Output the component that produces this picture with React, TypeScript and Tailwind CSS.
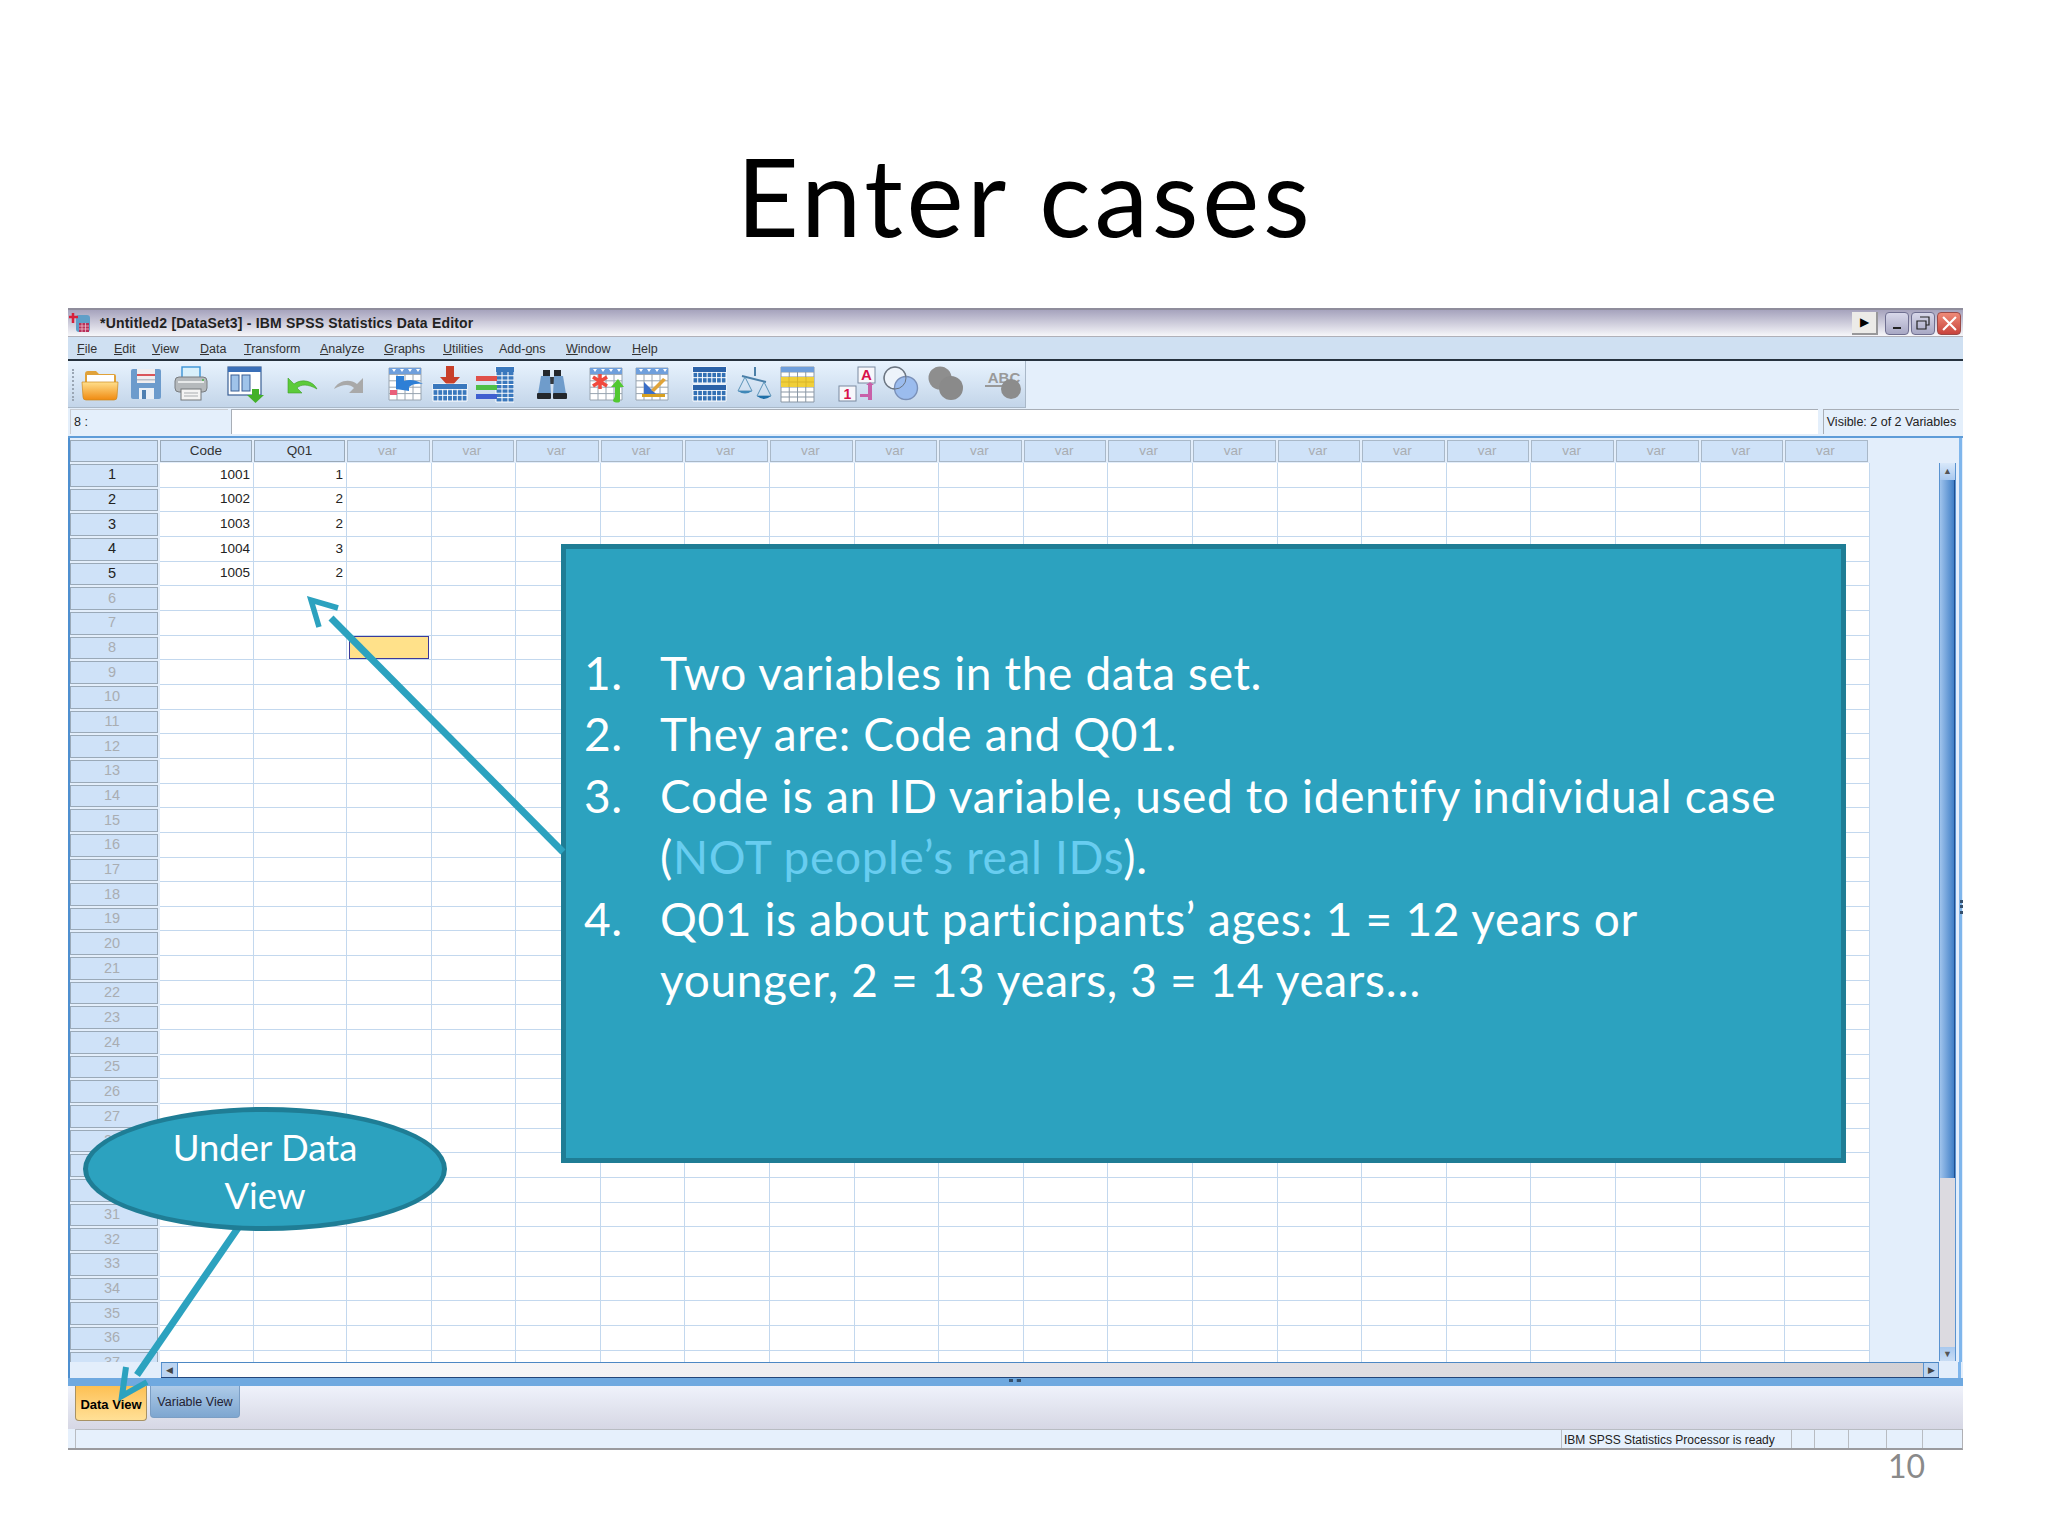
import React from "react";

const menus = [
  { pre: "", u: "F", post: "ile", cls: "w-[37px]" },
  { pre: "", u: "E", post: "dit", cls: "w-[38px]" },
  { pre: "", u: "V", post: "iew", cls: "w-[48px]" },
  { pre: "", u: "D", post: "ata", cls: "w-[44px]" },
  { pre: "", u: "T", post: "ransform", cls: "w-[76px]" },
  { pre: "", u: "A", post: "nalyze", cls: "w-[64px]" },
  { pre: "", u: "G", post: "raphs", cls: "w-[59px]" },
  { pre: "", u: "U", post: "tilities", cls: "w-[56px]" },
  { pre: "Add-", u: "o", post: "ns", cls: "w-[67px]" },
  { pre: "", u: "W", post: "indow", cls: "w-[66px]" },
  { pre: "", u: "H", post: "elp", cls: "w-[40px]" },
];

const varCols = Array.from({ length: 18 }, (_, i) => i);
const rowNums = Array.from({ length: 37 }, (_, i) => i + 1);
const data: Record<number, [string, string]> = {
  1: ["1001", "1"],
  2: ["1002", "2"],
  3: ["1003", "2"],
  4: ["1004", "3"],
  5: ["1005", "2"],
};

function Grid({ x, y, w, h, cols, rows, line = "#8a97a5", fill = "#fff" }: { x: number; y: number; w: number; h: number; cols: number; rows: number; line?: string; fill?: string }) {
  const v = Array.from({ length: cols + 1 }, (_, i) => x + (w * i) / cols);
  const r = Array.from({ length: rows + 1 }, (_, i) => y + (h * i) / rows);
  return (
    <g>
      <rect x={x} y={y} width={w} height={h} fill={fill} />
      {v.map((p) => <line key={"v" + p} x1={p} x2={p} y1={y} y2={y + h} stroke={line} strokeWidth="1" />)}
      {r.map((p) => <line key={"h" + p} x1={x} x2={x + w} y1={p} y2={p} stroke={line} strokeWidth="1" />)}
    </g>
  );
}

function HeaderTable() {
  return (
    <g>
      <Grid x={3} y={3} w={32} h={32} cols={4} rows={5} line="#98a4b0" />
      <rect x={3} y={3} width={32} height={6} fill="#6f9fdc" />
      <path d="M6 4h4l-2 3zM14 4h4l-2 3zM22 4h4l-2 3zM30 4h4l-2 3z" fill="#fff" />
    </g>
  );
}

function Ic({ ml, children }: { ml: string; children: React.ReactNode }) {
  return <svg viewBox="0 0 38 38" className={`w-[38px] h-[38px] shrink-0 ${ml}`}>{children}</svg>;
}

function Toolbar() {
  return (
    <div className="relative flex items-center w-[958px] h-[47px] bg-linear-to-b from-[#e8f3fe] to-[#c3d5e9] border-b border-r border-[#a9b8c8]">
      <div className="absolute left-[4px] top-[8px] h-[32px] w-[2px] border-l-2 border-dotted border-[#9aa6b4]"></div>
      <Ic ml="ml-[13px]">
        <defs>
          <linearGradient id="fo" x1="0" x2="0" y1="0" y2="1">
            <stop offset="0" stopColor="#ffdf8c" />
            <stop offset="1" stopColor="#f08a10" />
          </linearGradient>
        </defs>
        <path d="M4 9q0-3 3-3h8l3 3h15q2 0 2 2v8H4z" fill="#e0a23a" />
        <rect x="6" y="10" width="27" height="9" fill="#fff" />
        <path d="M1 17h36l-1 15q0 3-3 3H5q-3 0-3-3z" fill="url(#fo)" stroke="#cc8a20" strokeWidth="0.7" />
      </Ic>
      <Ic ml="ml-[8px]">
        <rect x="4" y="4" width="30" height="30" rx="2" fill="#6c9bcc" />
        <rect x="10" y="4" width="18" height="14" fill="#f0eef0" />
        <rect x="10" y="9" width="18" height="2" fill="#d9555a" />
        <rect x="10" y="14" width="18" height="1.5" fill="#b9bdc6" />
        <rect x="12" y="23" width="15" height="11" fill="#e9eff6" />
        <rect x="15" y="25" width="4" height="9" fill="#4f7fb0" />
      </Ic>
      <Ic ml="ml-[7px]">
        <rect x="10" y="2" width="18" height="12" fill="#d9f0fb" stroke="#3a93d6" strokeWidth="1.4" />
        <rect x="3" y="12" width="32" height="15" rx="4" fill="#b5b9bc" stroke="#797d80" />
        <rect x="6" y="16" width="26" height="2" fill="#e7e9ea" />
        <circle cx="31" cy="15" r="1" fill="#49b04a" />
        <rect x="9" y="24" width="20" height="11" fill="#f4f4f4" stroke="#74787b" />
        <path d="M12 28h14M12 31h14" stroke="#a9adb0" />
      </Ic>
      <Ic ml="ml-[17px]">
        <rect x="1" y="2" width="33" height="28" fill="#fff" stroke="#3a5f94" strokeWidth="1.2" />
        <rect x="1" y="2" width="33" height="5" fill="#3a6fb8" />
        <rect x="4" y="10" width="8" height="16" fill="#9fc3ea" stroke="#3a5f94" />
        <rect x="15" y="10" width="8" height="16" fill="#9fc3ea" stroke="#3a5f94" />
        <path d="M25 24h7v6h5l-8.500 8-8.500-8h5z" fill="#43b02a" />
      </Ic>
      <Ic ml="ml-[19px]">
        <path d="M4 13v15h14l-5-5c4-4 11-4 20 1-4-8-15-11-23-5z" fill="#5ccb3a" stroke="#3f9e2a" strokeWidth="0.6" />
      </Ic>
      <Ic ml="ml-[7px]">
        <path d="M34 13v15H20l5-5c-4-4-11-4-20 1 4-8 15-11 23-5z" fill="#a9a9a9" />
      </Ic>
      <Ic ml="ml-[19px]">
        <HeaderTable />
        <rect x="4" y="25" width="7" height="5" fill="#e9607a" />
        <path d="M10 11h8v5c6-2 12-1 19 3-6-1-11 0-14 3v4l-13-2z" fill="#2e7fd6" />
      </Ic>
      <Ic ml="ml-[7px]">
        <path d="M15 1h8v11h6L19 23 9 12h6z" fill="#c8402a" />
        <Grid x={2} y={19} w={34} h={17} cols={7} rows={3} line="#fff" fill="#3a78bd" />
        <rect x="2" y="19" width="34" height="5" fill="#3a78bd" />
      </Ic>
      <Ic ml="ml-[7px]">
        <Grid x={20} y={2} w={18} h={35} cols={3} rows={8} line="#fff" fill="#3a78bd" />
        <rect x="20" y="2" width="18" height="5" fill="#3a78bd" />
        <rect x="0" y="11" width="21" height="5" fill="#e0504a" />
        <rect x="0" y="20" width="21" height="5" fill="#4fbf46" />
        <rect x="0" y="29" width="21" height="5" fill="#3f5fd0" />
      </Ic>
      <Ic ml="ml-[19px]">
        <rect x="10" y="5" width="7" height="6" fill="#23272c" />
        <rect x="21" y="5" width="7" height="6" fill="#23272c" />
        <rect x="15" y="12" width="8" height="7" fill="#33383e" />
        <path d="M8 11h9l1 18H5z" fill="#6f9ccb" />
        <path d="M21 11h9l3 18H20z" fill="#6f9ccb" />
        <rect x="4" y="28" width="14" height="6" rx="1" fill="#23272c" />
        <rect x="20" y="28" width="14" height="6" rx="1" fill="#23272c" />
      </Ic>
      <Ic ml="ml-[16px]">
        <HeaderTable />
        <path d="M13 9v15M6 12l14 9M6 21l14-9" stroke="#f04a3e" strokeWidth="3.500" />
        <path d="M33 36V22h4l-6-8-7 8h4v8c0 3-2 4-2 6 2 2 7 2 7 0z" fill="#52c832" />
      </Ic>
      <Ic ml="ml-[8px]">
        <HeaderTable />
        <path d="M11 17v12h12z" fill="#3a6fc8" />
        <path d="M18 25l12-12 3 2-12 12z" fill="#e0a43a" />
        <rect x="9" y="29" width="23" height="3" fill="#d8a020" />
      </Ic>
      <Ic ml="ml-[20px]">
        <Grid x={2} y={2} w={33} h={16} cols={7} rows={3} line="#fff" fill="#3270b4" />
        <rect x="2" y="2" width="33" height="5" fill="#2b62a8" />
        <Grid x={2} y={20} w={33} h={16} cols={7} rows={3} line="#fff" fill="#3270b4" />
        <rect x="2" y="20" width="33" height="5" fill="#2b62a8" />
      </Ic>
      <Ic ml="ml-[6px]">
        <path d="M20 2v9M7 11l24 6" stroke="#4a7fa8" strokeWidth="2" />
        <path d="M10 12L3 26h14zM29 17l-7 14h14z" fill="none" stroke="#5a93b8" />
        <path d="M3 26q7 5 14 0z" fill="#3f88b8" />
        <path d="M22 31q7 6 14 0z" fill="#1f6fa8" />
      </Ic>
      <Ic ml="ml-[6px]">
        <Grid x={2} y={2} w={33} h={35} cols={4} rows={7} line="#8a97a5" />
        <rect x="2" y="2" width="33" height="5" fill="#6f9fdc" />
        <rect x="2" y="12" width="33" height="10" fill="#f0cf3a" />
        <path d="M10 12v10M18.500 12v10M27 12v10M2 17h33" stroke="#d8b52a" />
      </Ic>
      <Ic ml="ml-[21px]">
        <rect x="20" y="2" width="17" height="16" fill="#f7f7fb" stroke="#7a8aa0" />
        <text x="28.500" y="15" textAnchor="middle" fontSize="15" fontWeight="700" fill="#d8104a" fontFamily="Liberation Sans, sans-serif">A</text>
        <rect x="1" y="21" width="17" height="15" fill="#f7f7fb" stroke="#7a8aa0" />
        <text x="9.500" y="33.500" textAnchor="middle" fontSize="14" fontWeight="700" fill="#d8104a" fontFamily="Liberation Sans, sans-serif">1</text>
        <path d="M22 29h8v-9h-2l4-3 4 3h-2v15h-4v-3h-8z" fill="#c860a8" />
      </Ic>
      <Ic ml="ml-[6px]">
        <circle cx="13" cy="13" r="11" fill="#edf3fa" stroke="#808a96" strokeWidth="1.4" />
        <circle cx="24" cy="23" r="11.500" fill="#9bbcee" stroke="#7a90b8" strokeWidth="1.4" />
        <path d="M13 13m11 0a11 11 0 1 1-22 0a11 11 0 1 1 22 0" fill="none" stroke="#6a7480" strokeWidth="1" />
      </Ic>
      <Ic ml="ml-[7px]">
        <circle cx="13" cy="13" r="11.500" fill="#8e8e8e" />
        <circle cx="24" cy="23" r="12" fill="#8a8a8a" />
      </Ic>
      <Ic ml="ml-[19px]">
        <text x="20" y="18" textAnchor="middle" fontSize="15" fontWeight="700" fill="#999" fontFamily="Liberation Sans, sans-serif">ABC</text>
        <rect x="1" y="20" width="24" height="2" fill="#999" />
        <circle cx="27" cy="24" r="10" fill="#8c8c8c" />
      </Ic>
    </div>
  );
}

function Row({ n }: { n: number }) {
  const d = data[n];
  return (
    <div className="flex h-[24.67px]">
      <div className="w-[90px] shrink-0 bg-[#e3eefb] pr-[2px] pt-[1px] pb-[1px]">
        <div className={`h-full bg-[#cfe2f8] border border-[#9aa9b8] flex items-center justify-center pr-[4px] text-[14.500px] ${n <= 5 ? "text-[#222]" : "text-[#a9adb2]"}`}>{n}</div>
      </div>
      <div className="w-[94px] shrink-0 bg-white border-r border-b border-[#c3d8ee] flex items-center justify-end pr-[3px] text-[#222]">{d ? d[0] : ""}</div>
      <div className="w-[93px] shrink-0 bg-white border-r border-b border-[#c3d8ee] flex items-center justify-end pr-[3px] text-[#222]">{d ? d[1] : ""}</div>
      {varCols.map((c) => (
        <div key={c} className="w-[84.6px] shrink-0 bg-white border-r border-b border-[#c3d8ee] pl-[2px] pr-[2px] py-[0.5px]">
          {n === 8 && c === 0 ? <div className="h-full bg-[#ffe18a] border border-[#3c3a9a]"></div> : null}
        </div>
      ))}
    </div>
  );
}

function SpssWindow() {
  return (
    <div className="relative w-[1895px] h-[1142px] font-['Liberation_Sans',sans-serif]">
      <div className="h-[29px] flex items-center border-t-2 border-b border-t-[#8f8d9c] border-b-[#b0b0b8] bg-linear-to-b from-[#a6a3bd] to-[#f7f7fa]">
        <svg viewBox="0 0 22 22" className="w-[22px] h-[22px] ml-[1px] shrink-0">
          <rect x="7" y="3" width="14" height="17" rx="3" fill="#5f9fc8" />
          <path d="M4 1v10M0 5h9" stroke="#d8203a" strokeWidth="2.500" />
          <rect x="10" y="11" width="10" height="9" fill="#b8305a" />
          <path d="M10 14h10M10 17h10M13 11v9M16.500 11v9" stroke="#f0d0d8" strokeWidth="0.7" />
        </svg>
        <span className="ml-[9px] text-[14px] font-bold text-[#222] tracking-[0.2px] whitespace-nowrap">*Untitled2 [DataSet3] - IBM SPSS Statistics Data Editor</span>
        <div className="ml-auto mr-[2px] flex items-center">
          <div className="w-[26px] h-[23px] bg-[#ecebe8] border-r-2 border-b-2 border-[#98989a] flex items-center justify-center text-[12px] leading-none text-black">▶</div>
          <div className="ml-[7px] w-[24px] h-[23px] rounded-[4px] bg-linear-to-b from-[#d8d8ea] to-[#a8a8c4] border border-[#6f6f90] flex items-end justify-center pb-[5px]"><div className="w-[8px] h-[2px] bg-[#222]"></div></div>
          <div className="ml-[2px] w-[24px] h-[23px] rounded-[4px] bg-linear-to-b from-[#d8d8ea] to-[#a8a8c4] border border-[#6f6f90] flex items-center justify-center">
            <svg viewBox="0 0 14 14" className="w-[14px] h-[14px]"><path d="M4 1h9v8h-3M1 5h9v8H1z" fill="none" stroke="#222" strokeWidth="1.2" /></svg>
          </div>
          <div className="ml-[2px] w-[24px] h-[23px] rounded-[4px] bg-linear-to-b from-[#ee8a78] to-[#c8423c] border border-[#9a4a48] flex items-center justify-center">
            <svg viewBox="0 0 14 14" className="w-[15px] h-[15px]"><path d="M1 1l12 12M13 1L1 13" stroke="#fff" strokeWidth="2" /></svg>
          </div>
        </div>
      </div>

      <div className="h-[24px] flex items-center pl-[9px] pt-[3px] bg-[#cfe0f2] border-b-2 border-[#26323e] text-[12.500px] text-[#333]">
        {menus.map((m) => (
          <span key={m.u + m.post} className={`${m.cls} shrink-0 whitespace-nowrap`}>
            {m.pre}<span className="underline">{m.u}</span>{m.post}
          </span>
        ))}
      </div>

      <div className="flex bg-[#e4effb] h-[47px]">
        <Toolbar />
      </div>

      <div className="h-[28px] flex bg-[#e4effb] text-[12.500px] text-[#222] pt-[1px] pb-[2px]">
        <div className="ml-[2px] w-[158px] border-t border-l border-[#c8ccd2] flex items-center pl-[3px]">8 :</div>
        <div className="ml-[3px] w-[1587px] bg-white border-t border-l border-[#a8aeb6]"></div>
        <div className="ml-[5px] w-[136px] border-t border-l border-[#a8aeb6] flex items-center justify-center whitespace-nowrap">Visible: 2 of 2 Variables</div>
      </div>

      <div className="flex flex-col h-[950px] border-t-2 border-[#5e9cd8] bg-[#e3eefb] text-[13.500px] relative">
        <div className="flex h-[924px]">
          <div className="w-[1802px] shrink-0 border-l-2 border-[#4d8fd0] pt-[2px] overflow-hidden">
            <div className="flex h-[23px] pb-[1px]">
              <div className="w-[90px] shrink-0 pr-[2px]"><div className="h-full bg-[#cfe2f8] border border-[#9aa9b8]"></div></div>
              <div className="w-[94px] shrink-0 pr-[2px]"><div className="h-full bg-[#cfe2f8] border border-[#9aa9b8] flex items-center justify-center text-[#333]">Code</div></div>
              <div className="w-[93px] shrink-0 pr-[2px]"><div className="h-full bg-[#cfe2f8] border border-[#9aa9b8] flex items-center justify-center text-[#333]">Q01</div></div>
              {varCols.map((c) => (
                <div key={c} className="w-[84.6px] shrink-0 pr-[2px]"><div className="h-full bg-[#cfe2f8] border border-[#a9b8c8] flex items-center justify-center pr-[2px] text-[#a9adb2]">var</div></div>
              ))}
            </div>
            <div className="h-[899px] overflow-hidden">
              {rowNums.map((n) => <Row key={n} n={n} />)}
            </div>
          </div>
          <div className="w-[68px] shrink-0"></div>
          <div className="w-[17px] ml-[1px] mt-[25px] h-[898px] flex flex-col border-x border-[#5a93d0] shrink-0">
            <div className="h-[17px] bg-linear-to-b from-[#d8e8fa] to-[#a8c8ee] flex items-center justify-center text-[9px] leading-none text-[#555]">▲</div>
            <div className="h-[698px] bg-linear-to-r from-[#9fc3ec] to-[#3f7fc6] border-r border-[#1f4f90]"></div>
            <div className="flex-1 bg-[#dcdae0]"></div>
            <div className="h-[14px] bg-linear-to-b from-[#a8c8ee] to-[#c8dcf4] flex items-center justify-center text-[9px] leading-none text-[#555]">▼</div>
          </div>
          <div className="w-[3px] ml-[3px] bg-[#7fb6ec] shrink-0"></div>
        </div>
        <div className="flex h-[16px] border-l-2 border-[#4d8fd0]">
          <div className="w-[91px] shrink-0"></div>
          <div className="flex w-[1778px] border-y border-t-[#4d88c4] border-b-[#24467a]">
            <div className="w-[17px] shrink-0 bg-[#bcd5f2] border-x border-[#5a93d0] flex items-center justify-center text-[9px] leading-none text-[#444]">◀</div>
            <div className="flex-1 bg-linear-to-r from-white via-[#e8e6ea] to-[#d2d0d4]"></div>
            <div className="w-[16px] shrink-0 bg-[#bcd5f2] border-x border-[#5a93d0] flex items-center justify-center text-[9px] leading-none text-[#444]">▶</div>
          </div>
          <div className="ml-auto w-[3px] mr-[2px] bg-[#7fb6ec]"></div>
        </div>
        <div className="h-[8px] bg-[#6fa9e0]"></div>
        {/* splitter grips */}
        <div className="absolute left-[941px] bottom-[4px] w-[12px] h-[3px] border-b-[3px] border-dotted border-[#35506e]"></div>
        <div className="absolute right-[0px] top-[462px] w-[3px] h-[14px] border-r-[3px] border-dotted border-[#35506e]"></div>
      </div>

      <div className="h-[43px] flex items-start pl-[7px] bg-linear-to-b from-[#eff2fb] to-[#d6d7e4]">
        <div className="w-[72px] h-[35px] pt-[4px] rounded-b-[4px] border border-t-0 border-[#a89264] bg-linear-to-b from-[#fdc052] to-[#ffe096] flex items-center justify-center text-[13px] font-bold text-black whitespace-nowrap">Data View</div>
        <div className="ml-[3px] w-[90px] h-[32px] pt-[2px] rounded-b-[4px] border border-t-0 border-[#7b9ec4] bg-linear-to-b from-[#aecbe8] to-[#7ea6d0] flex items-center justify-center text-[12.500px] text-[#223] whitespace-nowrap">Variable View</div>
      </div>

      <div className="h-[21px] flex bg-[#e6f0fc] border-b-2 border-[#9a9a9e] border-r border-r-[#b0b0b4] text-[12px] text-[#222]">
        <div className="ml-[7px] w-[1486px] border-t border-l border-[#b8bcc2]"></div>
        <div className="w-[230px] border-t border-l border-[#b8bcc2] flex items-center pl-[2px] pt-[2px] whitespace-nowrap">IBM SPSS Statistics Processor is ready</div>
        <div className="w-[23px] border-t border-l border-[#b8bcc2]"></div>
        <div className="w-[34px] border-t border-l border-[#b8bcc2]"></div>
        <div className="w-[38px] border-t border-l border-[#b8bcc2]"></div>
        <div className="w-[36px] border-t border-l border-[#b8bcc2]"></div>
        <div className="flex-1 border-t border-l border-[#b8bcc2]"></div>
      </div>
    </div>
  );
}

export default function App() {
  return (
    <div className="relative w-[2048px] h-[1536px] bg-white overflow-hidden font-['Lato',sans-serif]">
      <div className="h-[308px] flex justify-center pt-[141px] pl-[2px]">
        <h1 className="text-[108px] leading-none tracking-[3.700px] text-black whitespace-nowrap">Enter cases</h1>
      </div>

      <div className="pl-[68px]">
        <SpssWindow />
      </div>

      <div className="flex justify-end pr-[123px] text-[32px] leading-[30px] pt-[1px] text-[#8a8a8a]">10</div>

      {/* callouts sit on top of the screenshot */}
      <div className="absolute left-[561px] top-[544px] w-[1285px] h-[619px] bg-[#2ca2bf] border-[5px] border-[#1f7d95] pl-[18px] pt-[93px] text-[46px] tracking-[0.65px] leading-[61.400px] text-white">
        <div className="flex"><span className="w-[76px] shrink-0">1.</span><span className="whitespace-nowrap">Two variables in the data set.</span></div>
        <div className="flex"><span className="w-[76px] shrink-0">2.</span><span className="whitespace-nowrap">They are: Code and Q01.</span></div>
        <div className="flex">
          <span className="w-[76px] shrink-0">3.</span>
          <span className="whitespace-nowrap">Code is an ID variable, used to identify individual case<br />(<span className="text-[#68cdf0]">NOT people’s real IDs</span>).</span>
        </div>
        <div className="flex">
          <span className="w-[76px] shrink-0">4.</span>
          <span className="whitespace-nowrap">Q01 is about participants’ ages: 1 = 12 years or<br />younger, 2 = 13 years, 3 = 14 years…</span>
        </div>
      </div>

      <svg className="absolute left-0 top-0 w-[2048px] h-[1536px] pointer-events-none" viewBox="0 0 2048 1536">
        <path d="M563 852L331 618" stroke="#2ca2bf" strokeWidth="7" fill="none" />
        <path d="M338 608L311 600L319 627" stroke="#2ca2bf" strokeWidth="5.500" fill="none" />
        <path d="M238 1228L137 1375" stroke="#2ca2bf" strokeWidth="7" fill="none" />
        <path d="M126 1367L122 1396L147 1382" stroke="#2ca2bf" strokeWidth="6" fill="none" />
      </svg>

      <div className="absolute left-[83px] top-[1107px] w-[364px] h-[124px] pt-[3px] rounded-[50%] bg-[#2ca2bf] border-[5px] border-[#1f7d95] flex flex-col items-center justify-center text-[36.500px] leading-[48px] text-white">
        <span>Under Data</span>
        <span>View</span>
      </div>
    </div>
  );
}
